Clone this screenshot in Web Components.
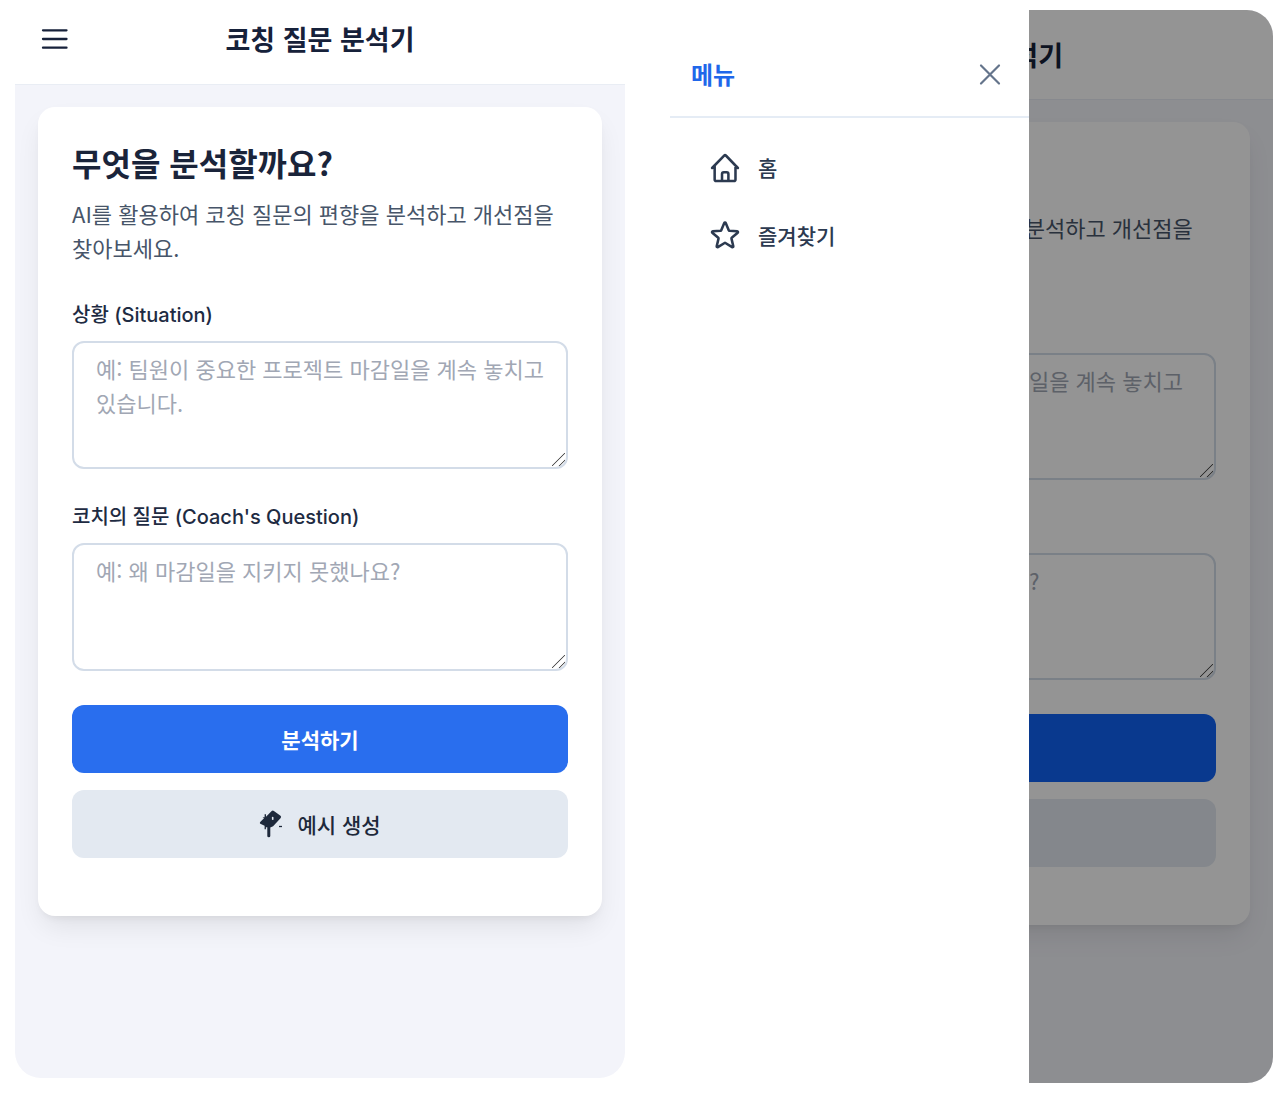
<!DOCTYPE html>
<html lang="ko">
<head>
<meta charset="utf-8">
<meta name="viewport" content="width=device-width, initial-scale=1">
<title>코칭 질문 분석기</title>
<style>
  body {
    margin: 0;
    background: #fff;
    color: #1e293b;
    font-family: "Noto Sans CJK KR", sans-serif;
  }
</style>
</head>
<body>
<app-gallery>
  <phone-screen slot="main">
    <app-header slot="header">코칭 질문 분석기</app-header>
    <analysis-card></analysis-card>
  </phone-screen>
  <phone-screen slot="menu">
    <app-header slot="header">코칭 질문 분석기</app-header>
    <analysis-card></analysis-card>
    <side-drawer slot="drawer">
      <menu-item icon="home">홈</menu-item>
      <menu-item icon="star">즐겨찾기</menu-item>
    </side-drawer>
  </phone-screen>
</app-gallery>

<script>
const define = (name, html) => {
  const template = document.createElement('template');
  template.innerHTML = '<style>*{box-sizing:border-box}</style>' + html;
  customElements.define(name, class extends HTMLElement {
    connectedCallback() {
      if (this.shadowRoot) return;
      this.attachShadow({ mode: 'open' }).append(template.content.cloneNode(true));
    }
  });
};

define('app-gallery', `
  <style>
    :host { display: grid; grid-template-columns: 610fr 609fr; gap: 39px; min-height: 100vh; padding: 0 7px 0 15px; box-sizing: border-box; }
    .cell { display: grid; }
    .main { padding-bottom: 20px; }
    .menu { padding: 10px 0 15px;
      --line: 33px; --label-line: 27px; --field-top: 9px; --field-bottom: 15px; --primary: #1162f5;
      --head-top: 23px; --head-bottom: 22px; --gutter-left: 13px; --corners: 0 26px 26px 0; --covered: hidden; }
  </style>
  <div class="cell main"><slot name="main"></slot></div>
  <div class="cell menu"><slot name="menu"></slot></div>`);

define('phone-screen', `
  <style>
    :host { display: flex; flex-direction: column; position: relative; overflow: hidden; background: #f3f4fa;
      border-radius: var(--corners, 0 0 26px 26px); }
    main { flex: 1; padding: 22px 23px 22px var(--gutter-left, 23px); }
  </style>
  <slot name="header"></slot>
  <main><slot></slot></main>
  <slot name="drawer"></slot>`);

define('app-header', `
  <style>
    :host { display: block; }
    header { display: grid; grid-template-columns: 1fr auto 1fr; align-items: center; background: #fff;
      padding: var(--head-top, 17px) 21px var(--head-bottom, 23px); border-bottom: 1px solid #e9edf4; }
    h1 { margin: 0; font-size: 27px; line-height: 44px; font-weight: 700; color: #16213a; }
    button { display: flex; justify-self: start; padding: 0; border: 0; background: none; color: #16213a; }
  </style>
  <header>
    <button type="button" aria-label="메뉴 열기">
      <svg width="38" height="38" viewBox="0 0 38 38" fill="none" stroke="currentColor" stroke-width="2.3" stroke-linecap="round"><path d="M7 10.3h23.5M7 19h23.5M7 27.7h23.5"/></svg>
    </button>
    <h1><slot></slot></h1>
  </header>`);

define('analysis-card', `
  <style>
    :host { display: block; background: #fff; border-radius: 17px; padding: 32px 34px 58px;
      box-shadow: 0 14px 28px -5px rgba(0,0,0,.09), 0 5px 10px -5px rgba(0,0,0,.09); }
    h2 { margin: 0 0 11px; font-size: 32px; line-height: 46px; font-weight: 700; color: #1a243a; }
    p { margin: 0 0 37px; font-size: 22px; line-height: var(--line, 34px); color: #475569; }
    /* Text that lies wholly behind an open drawer is not painted. */
    h2, .lead { visibility: var(--covered, visible); }
    form { display: flex; flex-direction: column; gap: 34px; }
    .field { display: flex; flex-direction: column; gap: 12px; }
    label { font: 500 20px/var(--label-line, 28px) Inter, "Noto Sans CJK KR", sans-serif; color: #1e2b42; }
    textarea { display: block; width: 100%; margin: 0; padding: var(--field-top, 8px) 22px var(--field-bottom, 14px); border: 2px solid #d3dce8; border-radius: 12px;
      background: #fff; font: 400 22px/var(--line, 34px) "Noto Sans CJK KR", sans-serif; color: #1e293b; resize: vertical; }
    textarea::placeholder { color: #a1a7b4; opacity: 1; }
    textarea::-webkit-resizer { background: linear-gradient(135deg, transparent 46%, #555 47%, #555 53%, transparent 54%, transparent 73%, #555 74%, #555 80%, transparent 81%) 1px 1px / 13px 13px no-repeat; }
    .actions { display: flex; flex-direction: column; gap: 17px; }
    button { display: flex; align-items: center; justify-content: center; gap: 10px; width: 100%; height: 68px; padding: 0; border: 0;
      border-radius: 12px; font: 500 21px/32px "Noto Sans CJK KR", sans-serif; color: #1e293b; background: #e3e9f1; }
    .primary { background: var(--primary, #296eee); color: #fff; font-weight: 700; }
  </style>
  <h2>무엇을 분석할까요?</h2>
  <p><span class="lead">AI를 활용하여 코칭 질문의 편향을</span> 분석하고 개선점을 <span class="lead">찾아보세요.</span></p>
  <form>
    <div class="field">
      <label for="situation">상황 (Situation)</label>
      <textarea id="situation" rows="3" placeholder="예: 팀원이 중요한 프로젝트 마감일을 계속 놓치고 있습니다."></textarea>
    </div>
    <div class="field">
      <label for="question">코치의 질문 (Coach's Question)</label>
      <textarea id="question" rows="3" placeholder="예: 왜 마감일을 지키지 못했나요?"></textarea>
    </div>
    <div class="actions">
      <button type="button" class="primary">분석하기</button>
      <button type="button">
        <svg width="28" height="28" viewBox="0 0 28 28" aria-hidden="true"><path fill="#1e293b" fill-rule="evenodd" d="M12.7 1.1q1.1-1 2.2 0l6.6 4.7q1.1 1 .2 2.1l-7.6 8.3-2.8 1.2v8.7q0 1.2-1.5 1.2t-1.5-1.2v-8.9H6.9v2H5.6v-3.4l-4.3-2q-.9-.9-.1-1.8L5 8.200l-1.400-1h2V4.200H7v2.600zM12.900 7.100v2.500q.9.800 1.600-.2V7.300q-.8-.9-1.600-.2z"/><path d="M20 16.500h3" stroke="#1e293b" stroke-width="1.300"/></svg>
        <span>예시 생성</span>
      </button>
    </div>
  </form>`);

define('side-drawer', `
  <style>
    :host { display: block; position: absolute; inset: 0; background: rgba(0,0,0,.42); }
    aside { width: 60%; height: 100%; padding-left: 6px; background: #fff; }
    header { display: flex; align-items: center; justify-content: space-between; padding: 42px 21px 20px; border-bottom: 2px solid #e5ecf5; }
    h2 { margin: 0; font-size: 24px; line-height: 44px; font-weight: 700; color: #2067ea; }
    button { display: flex; padding: 0; border: 0; background: none; color: #64748b; }
    nav { padding: 15px 0; }
  </style>
  <aside>
    <header>
      <h2>메뉴</h2>
      <button type="button" aria-label="닫기">
        <svg width="36" height="36" viewBox="0 0 36 36" fill="none" stroke="currentColor" stroke-width="2.2" stroke-linecap="round"><path d="m9 9.500 18 18M27 9.500l-18 18"/></svg>
      </button>
    </header>
    <nav><slot></slot></nav>
  </aside>`);

const icons = {
  home: 'M2.9 12.7 11.400 3.900q.6-.6 1.200 0L21.100 12.700M4.700 11v9.800q0 1.100 1.100 1.100h12.500q1.100 0 1.100-1.100V11M9.900 21.700v-4.800q0-1.200 1.200-1.200h2.100q1.200 0 1.200 1.200v4.800',
  star: 'M11.48 3.499a.562.562 0 0 1 1.04 0l2.125 5.111a.563.563 0 0 0 .475.345l5.518.442c.499.04.701.663.321.988l-4.204 3.602a.563.563 0 0 0-.182.557l1.285 5.385a.562.562 0 0 1-.84.61l-4.725-2.885a.562.562 0 0 0-.586 0L6.982 20.54a.562.562 0 0 1-.84-.61l1.285-5.386a.562.562 0 0 0-.182-.557l-4.204-3.602a.562.562 0 0 1 .321-.988l5.518-.442a.563.563 0 0 0 .475-.345L11.48 3.5Z'
};
customElements.define('menu-item', class extends HTMLElement {
  connectedCallback() {
    if (this.shadowRoot) return;
    this.attachShadow({ mode: 'open' }).innerHTML = `
      <style>
        :host { display: block; }
        a { display: flex; align-items: center; gap: 16px; height: 68px; padding-left: 38px; color: #2c3a50; text-decoration: none; font-size: 21px; line-height: 32px; font-weight: 500; }
      </style>
      <a href="#">
        <svg width="34" height="34" viewBox="0 0 24 24" fill="none" stroke="currentColor" stroke-width="1.8" stroke-linecap="round" stroke-linejoin="round" aria-hidden="true"><path d="${icons[this.getAttribute('icon')]}"/></svg>
        <span><slot></slot></span>
      </a>`;
  }
});
</script>
</body>
</html>
